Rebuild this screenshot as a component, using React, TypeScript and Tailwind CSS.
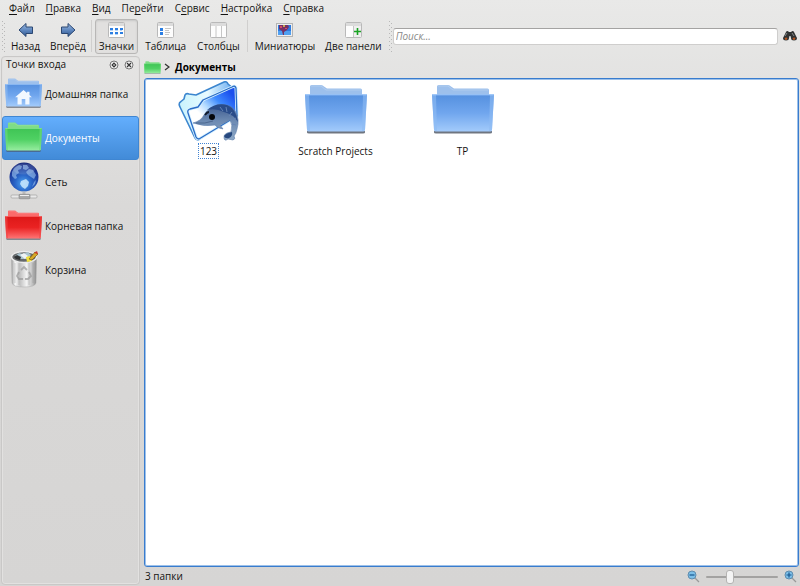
import { useId, useState, type ReactNode } from "react";

type Tone = "blue" | "green" | "red";

const tones: Record<Tone, { tab: string; top: string; mid: string; low: string; edge: string }> = {
  blue: { tab: "#9dc0ec", top: "#5590df", mid: "#70a6ee", low: "#a3cbfb", edge: "#8fbdf3" },
  green: { tab: "#7fdd86", top: "#3fc455", mid: "#4fd163", low: "#97eda0", edge: "#6fdc7c" },
  red: { tab: "#fb6a6a", top: "#dd1818", mid: "#ea2222", low: "#ff7474", edge: "#f04848" },
};

function Folder({ tone, className, home }: { tone: Tone; className: string; home?: boolean }) {
  const id = useId();
  const c = tones[tone];
  return (
    <svg viewBox="0 0 62 50" preserveAspectRatio="none" className={className} aria-hidden="true">
      <defs>
        <linearGradient id={id} x1="0" y1="0" x2="0" y2="1">
          <stop offset="0" stopColor={c.top} />
          <stop offset="0.5" stopColor={c.mid} />
          <stop offset="1" stopColor={c.low} />
        </linearGradient>
      </defs>
      <path d="M5 12V2.500Q5 1 6.500 1H16q2 0 3 1.500L22 4.500H55.500Q57 4.500 57 6V12Z" fill={c.tab} />
      <path d="M6 2H16l5 4H56" fill="none" stroke="#fff" strokeOpacity="0.2" />
      <path d="M2 47H60V48.500Q60 49.500 58 49.500H4Q2 49.500 2 48.500Z" fill="#4b5360" fillOpacity="0.8" />
      <path d="M0 10.500H62L60 46Q60 47.500 58 47.500H4Q2 47.500 2 46Z" fill={`url(#${id})`} />
      <path d="M0 10.500H4L5 47H4Q2 47 2 46ZM62 10.500H58L57 47H58Q60 47 60 46Z" fill={c.edge} fillOpacity="0.6" />
      <path d="M0.500 10.800H61.500" stroke={c.low} strokeWidth="1" />
      {home && <path d="M31 20L17 32h4v12h7V35h6v9h7V32h4l-4-3.500V23h-4v2Z" fill="#f2f8ff" />}
    </svg>
  );
}

function DolphinFolder() {
  return (
    <svg viewBox="0 0 62 62" className="h-[62px] w-[62px]" aria-hidden="true">
      <defs>
        <linearGradient id="dolphin-back" x1="0" y1="0.3" x2="1" y2="0.3">
          <stop offset="0" stopColor="#c9f3fd" />
          <stop offset="0.5" stopColor="#e8fbff" />
          <stop offset="1" stopColor="#5aa2f0" />
        </linearGradient>
        <linearGradient id="dolphin-front" x1="0.95" y1="0.2" x2="0.3" y2="0.9">
          <stop offset="0" stopColor="#1a50ee" />
          <stop offset="0.3" stopColor="#3f8cff" />
          <stop offset="0.55" stopColor="#b5dcff" />
          <stop offset="0.75" stopColor="#fff" />
        </linearGradient>
        <linearGradient id="dolphin-body" x1="0" y1="0" x2="0" y2="1">
          <stop offset="0" stopColor="#3a578c" />
          <stop offset="0.45" stopColor="#6c8ab2" />
          <stop offset="1" stopColor="#8da8c6" />
        </linearGradient>
      </defs>
      <path
        d="M2 26Q0 22 3 20.500L6 18L7 14Q8 12 11 13L18 14L46 1Q49 0 50 3L56 8L58 34L20 59Q18 59 17 57Z"
        fill="url(#dolphin-back)"
        stroke="#3c86cf"
        strokeWidth="1.600"
        strokeLinejoin="round"
      />
      <path
        d="M10 32Q9 29 12 28L20 26L25 19L54 6Q57 4 58 7L59 35L21 58Q19 58 18 56Z"
        fill="url(#dolphin-front)"
        stroke="#d6f1ff"
        strokeWidth="3"
        strokeLinejoin="round"
      />
      <path
        d="M10 32Q9 29 12 28L20 26L25 19L54 6Q57 4 58 7L59 35L21 58Q19 58 18 56Z"
        fill="none"
        stroke="#2a6cc6"
        strokeWidth="1.300"
        strokeLinejoin="round"
      />
      <path
        d="M15 42Q23 40 26 34Q30 27 40 24Q52 22 57 30Q62 38 59 48Q58 53 56 55Q58 58 55 59L50 58Q46 61 46 56Q46 52 53 51Q55 44 52 39Q47 42 42 44L45 48Q39 47 37 44Q26 46 15 42Z"
        fill="url(#dolphin-body)"
        stroke="#5e7eab"
        strokeWidth="0.600"
      />
      <path d="M29 29Q38 21 49 24Q58 28 60 41Q55 33 46 31Q38 27 29 29Z" fill="#294c8a" />
      <path d="M42 26l3 4M48 26l1 5M54 31l-3 4M58 37l-4 2M58 44l-4-1" stroke="#6584b5" strokeWidth="1" />
      <path d="M46 55Q48 52 54 51Q55 55 51 57Q47 58 46 55Z" fill="#27497f" />
      <path d="M18 42Q27 43 35 40" fill="none" stroke="#455f88" strokeWidth="0.800" />
      <circle cx="34" cy="36" r="3" fill="#05070b" />
      <path d="M27 34q2-3 4-3" fill="none" stroke="#10192b" strokeWidth="1.800" />
    </svg>
  );
}

function Globe() {
  return (
    <svg viewBox="0 0 30 38" className="h-[38px] w-[30px]" aria-hidden="true">
      <defs>
        <radialGradient id="globe-sea" cx="0.48" cy="0.72" r="0.72">
          <stop offset="0" stopColor="#4fa6f2" />
          <stop offset="0.4" stopColor="#2a66c8" />
          <stop offset="0.8" stopColor="#1b3594" />
          <stop offset="1" stopColor="#172878" />
        </radialGradient>
      </defs>
      <circle cx="15" cy="15" r="14.500" fill="url(#globe-sea)" />
      <path d="M3 10Q5 5 10 3L13 4L12 7L9 8L10 11L7 13L8 16L6 17L3 14Z" fill="#9cc7f2" fillOpacity="0.6" />
      <path d="M14 3L18 3L20 6L17 8L14 7ZM20 7L24 8L27 13L25 17L22 15L19 13L17 10Z" fill="#9cc7f2" fillOpacity="0.6" />
      <path d="M12 19L17 17L20 20L19 24L16 27L13 25L11 22Z" fill="#d5efff" fillOpacity="0.8" />
      <path d="M25 20l2-2-1 4-3 3Z" fill="#9cc7f2" fillOpacity="0.6" />
      <ellipse cx="15" cy="7" rx="11" ry="5.500" fill="#fff" fillOpacity="0.12" />
      <path d="M13.500 29.500h3V33h-3Z" fill="#bbb" />
      <rect x="2" y="33" width="26" height="3" rx="1" fill="#e9e9e9" stroke="#999" strokeWidth="0.600" />
      <rect x="10" y="32.300" width="11" height="4.500" rx="1" fill="#a9a9a9" stroke="#888" strokeWidth="0.600" />
      <path d="M11 33.500h9" stroke="#eee" />
    </svg>
  );
}

function Trash() {
  return (
    <svg viewBox="0 0 28 38" className="h-[38px] w-[28px]" aria-hidden="true">
      <defs>
        <linearGradient id="trash-can" x1="0" x2="1">
          <stop offset="0" stopColor="#9a9a9a" />
          <stop offset="0.15" stopColor="#f7f7f7" />
          <stop offset="0.35" stopColor="#c4c4c4" />
          <stop offset="0.6" stopColor="#f2f2f2" />
          <stop offset="0.85" stopColor="#bdbdbd" />
          <stop offset="1" stopColor="#858585" />
        </linearGradient>
      </defs>
      <path d="M1.500 7L2 33Q3 37 14 37Q25 37 26 33L26.500 7Z" fill="url(#trash-can)" stroke="#aaa" strokeWidth="0.500" />
      <path d="M5 13V33M9 13V35M19 13V35M23 13V33" stroke="#888" strokeOpacity="0.45" strokeWidth="0.800" />
      <ellipse cx="14" cy="7" rx="12.500" ry="5.500" fill="#66696b" stroke="#ededed" strokeWidth="1.500" />
      <path d="M5 6L9 3L13 4L18 2L21 5L17 9L8 9Z" fill="#a9c3ce" />
      <path d="M4 7l3-2 4 2-1 3-4-1Z" fill="#303335" />
      <path d="M10 5l4-2 4 3-3 3Z" fill="#eef3f5" />
      <path d="M16 7l4-1 2 5-5 1Z" fill="#f3e13c" />
      <path d="M19 9L25 2L28 4L22 10Z" fill="#d6a827" stroke="#6a4d12" strokeWidth="0.600" />
      <path d="M24 3L27 1L28 4Z" fill="#c9362a" />
      <g fill="none" stroke="#989898" strokeWidth="1.800" strokeOpacity="0.7">
        <path d="M11 20l3-3 3 3" />
        <path d="M19 22l2 4-3 3h-3" />
        <path d="M13 29H9l-2-3 2-4" />
      </g>
    </svg>
  );
}

function Arrow({ flip }: { flip?: boolean }) {
  return (
    <svg viewBox="0 0 16 16" className={flip ? "h-4 w-4 -scale-x-100" : "h-4 w-4"} aria-hidden="true">
      <defs>
        <linearGradient id={flip ? "arrow-r" : "arrow-l"} x1="0" y1="0" x2="0" y2="1">
          <stop offset="0" stopColor="#9cbae1" />
          <stop offset="0.5" stopColor="#6189c0" />
          <stop offset="1" stopColor="#2d568f" />
        </linearGradient>
      </defs>
      <path
        d="M1 8L8 1.500V5H14.500V11.500H8V14.500Z"
        fill={flip ? "url(#arrow-r)" : "url(#arrow-l)"}
        stroke="#2c4873"
        strokeLinejoin="round"
      />
    </svg>
  );
}

function Sheet({ children }: { children: ReactNode }) {
  return (
    <svg viewBox="0 0 17 16" className="h-4 w-[17px]" aria-hidden="true">
      <rect x="0.500" y="0.500" width="16" height="15" rx="1" fill="#fdfdfd" stroke="#b9b9b9" />
      <path d="M1 1h15v3H1Z" fill="#dcdcdc" />
      {children}
    </svg>
  );
}

function IconsGlyph() {
  return (
    <Sheet>
      <path d="M2 6h3v2H2ZM7 6h3v2H7ZM12 6h3v2h-3ZM2 10h3v2H2ZM7 10h3v2H7ZM12 10h3v2h-3Z" fill="#2b7ee2" />
      <path d="M2 8.500h3M7 8.500h3M12 8.500h2M2 12.500h3M7 12.500h3" stroke="#b4d3f6" />
    </Sheet>
  );
}

function TableGlyph() {
  return (
    <Sheet>
      <path d="M3 6h3v3H3ZM3 10h3v3H3Z" fill="#2b7ee2" />
      <path d="M8 6.500h6M8 8.500h4M8 10.500h5M8 12.500h4" stroke="#c6c6c6" />
    </Sheet>
  );
}

function ColumnsGlyph() {
  return (
    <Sheet>
      <path d="M6 4v11M11.500 4v11" stroke="#c6c6c6" />
    </Sheet>
  );
}

function PreviewGlyph() {
  return (
    <svg viewBox="0 0 17 16" className="h-4 w-[17px]" aria-hidden="true">
      <rect x="0.500" y="1.500" width="16" height="13" fill="#eee" stroke="#b4b4b4" />
      <path d="M2 3h13v10H2Z" fill="#2d7be0" />
      <path d="M2 9h13v4H2Z" fill="#4f9ff0" />
      <path d="M3 3h9l1 2-2 3-3 2v3H7l-1-4-3-2Z" fill="#743166" />
      <path d="M4 4h2v2H4ZM9 6h2v1H9Z" fill="#d54a63" />
      <path d="M7 3h2v2H7Z" fill="#c9a552" />
    </svg>
  );
}

function SplitGlyph() {
  return (
    <Sheet>
      <path d="M9 4h7v11H9Z" fill="#efefef" />
      <path d="M8.500 4v11" stroke="#c6c6c6" />
      <path d="M12.500 6v7M9 9.500h7" stroke="#19a322" strokeWidth="1.600" />
    </Sheet>
  );
}

function Binoculars() {
  return (
    <svg viewBox="0 0 14 12" className="h-3 w-[14px]" aria-hidden="true">
      <path d="M3 2Q4 0 6 2H8Q10 0 11 2L14 8Q14 10.500 11 10.500Q8 10.500 8 8L7.500 6H6.500L6 8Q6 10.500 3 10.500Q0 10.500 0 8Z" fill="#303333" />
      <path d="M4 3L2 6M9 3l2 3" stroke="#858989" />
      <path d="M1.500 8q2-1 3 0l-1 2h-1ZM9.500 8q2-1 3 0l-1 2h-1Z" fill="#b5541f" />
    </svg>
  );
}

function Magnifier({ plus }: { plus?: boolean }) {
  return (
    <svg viewBox="0 0 13 13" className="h-[13px] w-[13px] shrink-0" aria-hidden="true">
      <path d="M7.500 7.500L12 12" stroke="#999" strokeWidth="1.300" />
      <circle cx="5" cy="5" r="4" fill="#7cbfe8" stroke="#5f8cad" />
      <path d={plus ? "M2.500 5h5M5 2.500v5" : "M2.500 5h5"} stroke="#17568e" strokeWidth="1.200" />
    </svg>
  );
}

function DockGlyph({ close }: { close?: boolean }) {
  return (
    <svg viewBox="0 0 10 10" className="h-[10px] w-[10px]" aria-hidden="true">
      <circle cx="5" cy="5" r="4" fill="#f0f0f0" stroke="#777" />
      {close ? (
        <path d="M3 3l4 4M7 3L3 7" stroke="#333" strokeWidth="1.200" />
      ) : (
        <path d="M5 3.200L6.800 5L5 6.800L3.200 5Z" fill="none" stroke="#333" strokeWidth="1.200" />
      )}
    </svg>
  );
}

function Grip() {
  return (
    <svg viewBox="0 0 4 32" className="h-8 w-1 shrink-0" aria-hidden="true">
      <path d="M0.500 1v31" stroke="#b8b8b8" strokeDasharray="1 3" />
      <path d="M2.500 3v29" stroke="#b8b8b8" strokeDasharray="1 3" />
    </svg>
  );
}

function Separator() {
  return <div className="h-8 w-px shrink-0 bg-[#d0cfce]" />;
}

// [before, accelerator, after]
const menus = [
  ["", "Ф", "айл"],
  ["", "П", "равка"],
  ["", "В", "ид"],
  ["Пе", "р", "ейти"],
  ["С", "е", "рвис"],
  ["", "Н", "астройка"],
  ["", "С", "правка"],
];

function ToolButton({ icon, label, active, onClick }: { icon: ReactNode; label: string; active?: boolean; onClick?: () => void }) {
  return (
    <button
      onClick={onClick}
      className={`flex h-[35px] shrink-0 flex-col items-center gap-px rounded-[3px] border px-[3px] pt-[2px] ${
        active ? "border-[#b8b7b6] bg-[#e1e0df] shadow-[inset_0_1px_2px_#c6c6c6]" : "border-transparent"
      }`}
    >
      {icon}
      <span className="leading-[14px]">{label}</span>
    </button>
  );
}

const places = [
  { name: "Домашняя папка", icon: <Folder tone="blue" home className="h-[30px] w-[37px]" /> },
  { name: "Документы", icon: <Folder tone="green" className="h-[30px] w-[37px]" /> },
  { name: "Сеть", icon: <Globe /> },
  { name: "Корневая папка", icon: <Folder tone="red" className="h-[30px] w-[37px]" /> },
  { name: "Корзина", icon: <Trash /> },
];

const files = [
  { name: "123", icon: <DolphinFolder />, focused: true },
  { name: "Scratch Projects", icon: <Folder tone="blue" className="h-[50px] w-[62px]" /> },
  { name: "TP", icon: <Folder tone="blue" className="h-[50px] w-[62px]" /> },
];

export default function App() {
  const [view, setView] = useState("icons");
  const [place, setPlace] = useState("Документы");
  const [zoom, setZoom] = useState(31);

  return (
    <div className="flex h-screen flex-col overflow-hidden bg-linear-to-b from-[#e9e9e8] via-[#dad9d8] via-35% to-[#d6d5d4] font-['Open_Sans','Noto_Sans',sans-serif] text-[10px] font-medium text-[#141312]">
      {/* Menu bar */}
      <nav className="flex h-4 shrink-0 items-center gap-[11px] pl-[9px]">
        {menus.map(([before, key, after]) => (
          <button key={before + key + after} className="leading-[14px]">
            {before}
            <span className="underline underline-offset-2">{key}</span>
            {after}
          </button>
        ))}
      </nav>

      {/* Toolbar */}
      <div className="flex h-10 shrink-0 items-center pr-[3px] pl-[2px]">
        <Grip />
        <div className="flex gap-[2px] px-px">
          <ToolButton icon={<Arrow />} label="Назад" />
          <ToolButton icon={<Arrow flip />} label="Вперёд" />
        </div>
        <Separator />
        <div className="flex gap-[3px] px-[3px]">
          <ToolButton icon={<IconsGlyph />} label="Значки" active={view === "icons"} onClick={() => setView("icons")} />
          <ToolButton icon={<TableGlyph />} label="Таблица" active={view === "table"} onClick={() => setView("table")} />
          <ToolButton icon={<ColumnsGlyph />} label="Столбцы" active={view === "columns"} onClick={() => setView("columns")} />
        </div>
        <Separator />
        <div className="flex gap-[2px] px-[3px]">
          <ToolButton icon={<PreviewGlyph />} label="Миниатюры" />
          <ToolButton icon={<SplitGlyph />} label="Две панели" />
        </div>
        <Grip />
        <input
          type="search"
          aria-label="Поиск"
          placeholder="Поиск..."
          className="mr-[5px] h-[17px] min-w-0 flex-1 rounded-[3px] border border-[#cfcecd] border-t-[#a4a3a2] bg-white px-[2px] placeholder:text-[#8a8a8a] placeholder:italic"
        />
        <button aria-label="Найти">
          <Binoculars />
        </button>
      </div>

      <div className="flex min-h-0 flex-1">
        {/* Places panel */}
        <aside className="mb-px ml-px w-[139px] shrink-0 rounded-[4px] border border-[#c9c8c7] shadow-[inset_0_0_0_1px_#e2e1e0]">
          <div className="flex h-[15px] items-center gap-[5px] pr-[5px] pl-1">
            <h2 className="flex-1">Точки входа</h2>
            <button aria-label="Открепить">
              <DockGlyph />
            </button>
            <button aria-label="Закрыть">
              <DockGlyph close />
            </button>
          </div>
          {places.map(p => (
            <button
              key={p.name}
              onClick={() => setPlace(p.name)}
              className={`flex h-11 w-full items-center gap-[3px] rounded-[3px] border pl-[2px] text-left ${
                place === p.name ? "border-[#3f86d2] bg-linear-to-b from-[#63aefd] to-[#428bd8] text-white" : "border-transparent"
              }`}
            >
              <span className="flex w-[37px] shrink-0 justify-center pb-[2px]">{p.icon}</span>
              {p.name}
            </button>
          ))}
        </aside>

        {/* Folder view */}
        <main className="ml-1 flex min-w-0 flex-1 flex-col">
          <div className="flex h-[22px] shrink-0 items-center gap-[3px]">
            <Folder tone="green" className="h-[13px] w-[17px]" />
            <svg viewBox="0 0 6 8" className="h-2 w-[6px]" aria-hidden="true">
              <path d="M1 1l4 3-4 3" fill="none" stroke="#333" strokeWidth="1.300" />
            </svg>
            <a href="#documents" className="ml-[2px] font-bold text-black">
              Документы
            </a>
          </div>
          <div className="mr-px flex min-h-0 flex-1 flex-wrap content-start overflow-auto rounded-[3px] border border-[#397cce] bg-white pt-[2px] shadow-[inset_0_0_0_1px_#9dc1ea]">
            {files.map(f => (
              <div key={f.name} className="flex w-[127px] flex-col items-center">
                <div className="flex h-[62px] flex-col justify-center">
                  <div className={f.focused ? "" : "pb-[6px]"}>{f.icon}</div>
                </div>
                <span
                  className={`border border-dotted px-px leading-[14px] ${f.focused ? "border-[#4384d2]" : "border-transparent"}`}
                >
                  {f.name}
                </span>
              </div>
            ))}
          </div>
          <footer className="flex h-[19px] shrink-0 items-center gap-[6px] pr-[3px] pl-px">
            <span className="flex-1">3 папки</span>
            <Magnifier />
            <input
              type="range"
              aria-label="Масштаб"
              value={zoom}
              onChange={e => setZoom(Number(e.target.value))}
              className="h-4 w-[72px] appearance-none bg-transparent [&::-webkit-slider-runnable-track]:h-[2px] [&::-webkit-slider-runnable-track]:rounded [&::-webkit-slider-runnable-track]:bg-[#a3a2a1] [&::-webkit-slider-thumb]:-mt-[6px] [&::-webkit-slider-thumb]:h-[14px] [&::-webkit-slider-thumb]:w-2 [&::-webkit-slider-thumb]:appearance-none [&::-webkit-slider-thumb]:rounded-[3px] [&::-webkit-slider-thumb]:border [&::-webkit-slider-thumb]:border-[#b4b3b2] [&::-webkit-slider-thumb]:bg-[#f4f4f4]"
            />
            <Magnifier plus />
          </footer>
        </main>
      </div>
    </div>
  );
}
